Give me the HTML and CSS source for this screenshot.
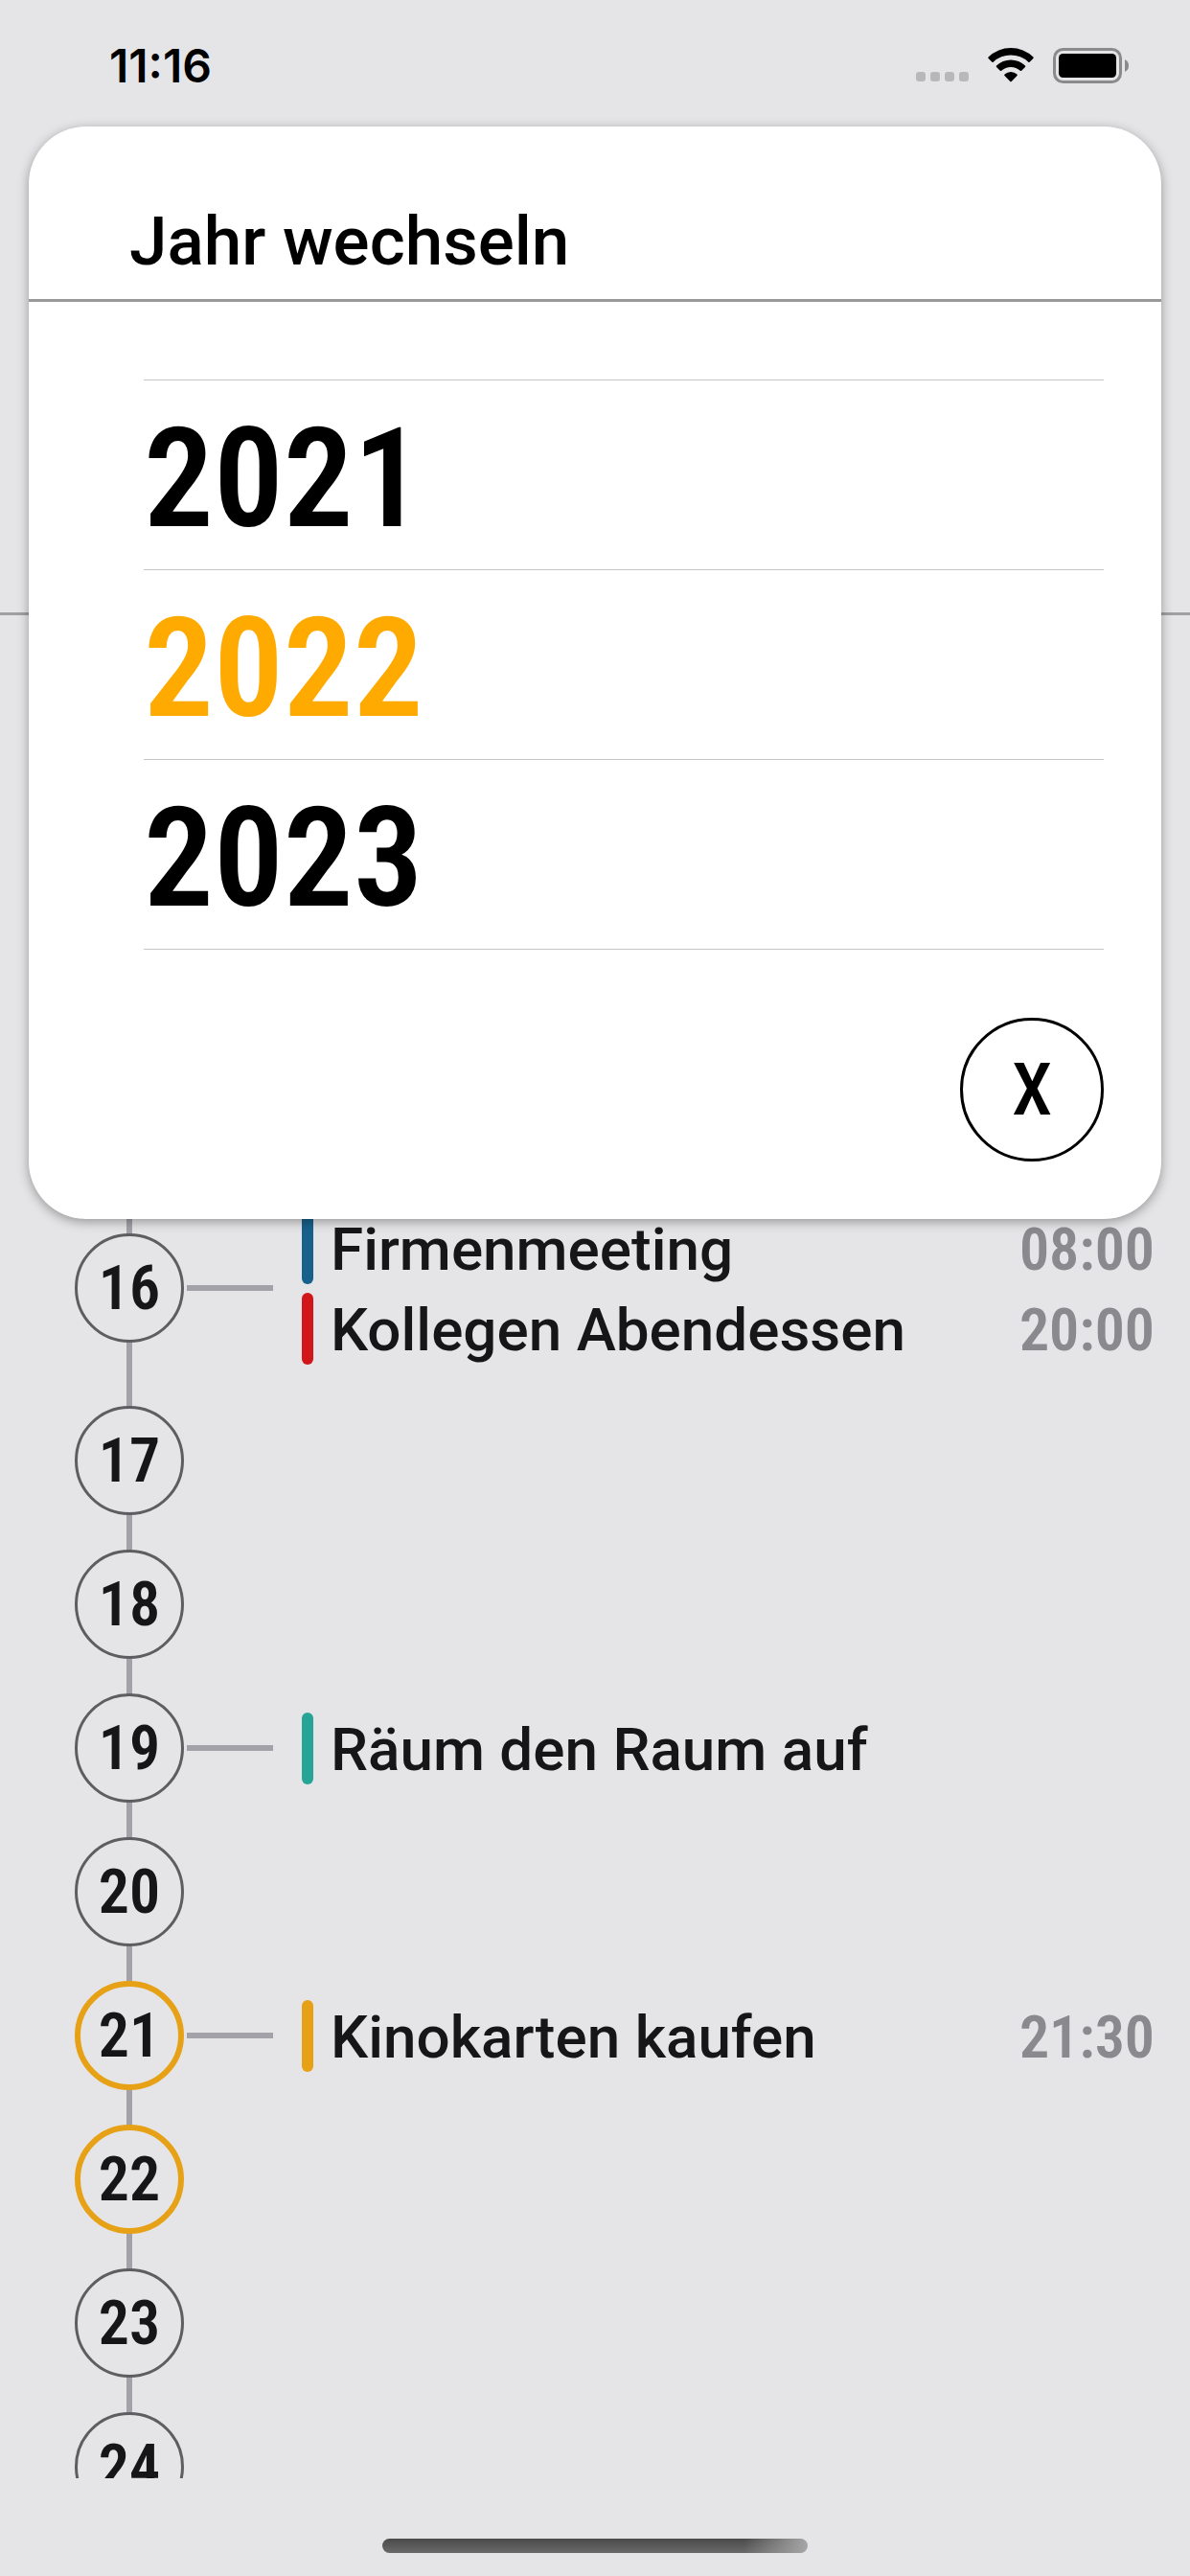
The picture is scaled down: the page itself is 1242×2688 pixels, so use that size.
FILE: index.html
```
<!DOCTYPE html>
<html lang="de">
<head>
    <meta charset="UTF-8">
    <meta name="viewport" content="width=device-width, initial-scale=1.0">
    <title>Jahr wechseln</title>
    <link rel="stylesheet" href="styles.css">
</head>
<body>
    <div class="status-bar">
        <span class="clock">11:16</span>
        <div class="status-icons">
            <svg class="signal" width="55" height="12" viewBox="0 0 55 12">
                <rect x="0" width="10" height="10" rx="3"/>
                <rect x="15" width="10" height="10" rx="3"/>
                <rect x="30" width="10" height="10" rx="3"/>
                <rect x="45" width="10" height="10" rx="3"/>
            </svg>
            <svg class="wifi" width="48" height="37" viewBox="0 0 48 37">
                <path d="M0.6 9.6 A33.5 33.5 0 0 1 47.4 9.6 Q48 10.3 47.4 11 L43.6 14.8 Q43 15.3 42.3 14.8 A26.5 26.5 0 0 0 5.7 14.8 Q5 15.3 4.4 14.8 L0.6 11 Q0 10.3 0.6 9.6 Z"/>
                <path d="M9 18.6 A21.5 21.5 0 0 1 39 18.6 Q39.6 19.3 39 20 L35.2 23.8 Q34.5 24.4 33.8 23.8 A14.5 14.5 0 0 0 14.2 23.8 Q13.5 24.4 12.8 23.8 L9 20 Q8.4 19.3 9 18.6 Z"/>
                <path d="M17.5 27.6 A9.6 9.6 0 0 1 30.5 27.6 Q31.2 28.4 30.5 29.1 L24.7 35 Q24 35.7 23.3 35 L17.5 29.1 Q16.8 28.4 17.5 27.6 Z"/>
            </svg>
            <svg class="battery" width="80" height="37" viewBox="0 0 80 37">
                <rect class="battery-body" x="1.5" y="1.5" width="69" height="34" rx="9"/>
                <rect x="6" y="6" width="60" height="25" rx="4.5"/>
                <path class="battery-tip" d="M75 12 Q79 14 79 18.5 Q79 23 75 25 Z"/>
            </svg>
        </div>
    </div>

    <header class="month-header"></header>

    <main class="timeline">
        <ul class="days">
            <li class="day">
                <div class="date"><span class="circle">16</span></div>
                <div class="link"></div>
                <div class="events">
                    <div class="event blue"><span class="name">Firmenmeeting</span><time>08:00</time></div>
                    <div class="event red"><span class="name">Kollegen Abendessen</span><time>20:00</time></div>
                </div>
            </li>
            <li class="day">
                <div class="date"><span class="circle">17</span></div>
            </li>
            <li class="day">
                <div class="date"><span class="circle">18</span></div>
            </li>
            <li class="day">
                <div class="date"><span class="circle">19</span></div>
                <div class="link"></div>
                <div class="events">
                    <div class="event green"><span class="name">Räum den Raum auf</span></div>
                </div>
            </li>
            <li class="day">
                <div class="date"><span class="circle">20</span></div>
            </li>
            <li class="day">
                <div class="date"><span class="circle marked">21</span></div>
                <div class="link"></div>
                <div class="events">
                    <div class="event orange"><span class="name">Kinokarten kaufen</span><time>21:30</time></div>
                </div>
            </li>
            <li class="day">
                <div class="date"><span class="circle marked">22</span></div>
            </li>
            <li class="day">
                <div class="date"><span class="circle">23</span></div>
            </li>
            <li class="day">
                <div class="date"><span class="circle">24</span></div>
            </li>
        </ul>
    </main>

    <footer class="home-area">
        <div class="home-indicator"></div>
    </footer>

    <!-- Year picker, opens over the timeline -->
    <section class="modal" role="dialog" aria-labelledby="modal-title">
        <h1 id="modal-title">Jahr wechseln</h1>
        <div class="years">
            <button class="year">2021</button>
            <button class="year selected">2022</button>
            <button class="year">2023</button>
        </div>
        <div class="modal-footer">
            <button class="close-btn" aria-label="Schließen">X</button>
        </div>
    </section>
</body>
</html>
```
FILE: styles.css
```
* {
    margin: 0;
    padding: 0;
    box-sizing: border-box;
}

body {
    display: flex;
    flex-direction: column;
    height: 100vh;
    overflow: hidden;
    font-family: Roboto, sans-serif;
    font-weight: 500;
    background-color: #e5e5e7;
    color: #161618;
}

/* Status bar */
.status-bar {
    display: flex;
    flex: none;
    justify-content: space-between;
    align-items: center;
    height: 136px;
    padding: 0 63px 0 114px;
}

.clock {
    font-family: Inter, sans-serif;
    font-weight: 600;
    font-size: 48px;
    color: #000;
}

.status-icons {
    display: flex;
    align-items: flex-end;
    gap: 20px;
}

.signal {
    fill: #b8b8ba;
}

.battery-body {
    fill: none;
    stroke: #8a8a8c;
    stroke-width: 3;
}

.battery-tip {
    fill: #8a8a8c;
}

.month-header {
    flex: none;
    height: 506px;
    border-bottom: 3px solid #a0a0a2;
}

/* Timeline */
.timeline {
    flex: 1;
    min-height: 0;
    overflow: hidden;
    padding-top: 597px;
}

.days {
    list-style: none;
}

.day {
    display: flex;
    align-items: center;
    min-height: 150px;
    padding-right: 37px;
}

.date {
    display: flex;
    align-self: stretch;
    align-items: center;
    justify-content: center;
    width: 114px;
    margin-left: 78px;
    background: linear-gradient(#a3a2a8, #a3a2a8) center / 6px 100% no-repeat;
}

.circle {
    display: flex;
    align-items: center;
    justify-content: center;
    width: 114px;
    height: 114px;
    border: 3px solid #5e5e60;
    border-radius: 50%;
    background-color: #e5e5e7;
    font-family: "Roboto Condensed", Roboto, sans-serif;
    font-weight: 600;
    font-size: 64px;
}

.circle.marked {
    border: 6px solid #e6a117;
}

.link {
    width: 90px;
    height: 6px;
    margin: 0 30px 0 3px;
    background-color: #a3a2a8;
}

.events {
    display: flex;
    flex: 1;
    flex-direction: column;
    gap: 9px;
    padding: 26px 0 25px;
}

.event {
    display: flex;
    align-items: center;
    height: 75px;
}

.event::before {
    content: "";
    width: 12px;
    height: 100%;
    border-radius: 6px;
}

.event.blue::before {
    background-color: #18618b;
}

.event.red::before {
    background-color: #d11719;
}

.event.green::before {
    background-color: #26a596;
}

.event.orange::before {
    background-color: #e6a117;
}

.name {
    flex: 1;
    padding-top: 2px;
    padding-left: 18px;
    font-size: 62px;
    white-space: nowrap;
}

.event time {
    padding-top: 2px;
    font-family: "Roboto Condensed", Roboto, sans-serif;
    font-weight: 600;
    font-size: 62px;
    color: #8a898e;
}

/* Home indicator */
.home-area {
    display: flex;
    flex: none;
    justify-content: center;
    height: 102px;
    padding-top: 63px;
}

.home-indicator {
    width: 444px;
    height: 15px;
    border-radius: 8px;
    background: linear-gradient(to right, transparent 85%, #a6a6a6), linear-gradient(#4a4a4a, #6a6a6a);
}

/* Year picker */
.modal {
    position: absolute;
    top: 132px;
    left: 30px;
    right: 30px;
    border-radius: 60px;
    background-color: #fff;
    box-shadow: 0 3px 12px rgba(0, 0, 0, 0.35);
    color: #000;
}

.modal h1 {
    padding: 70px 105px 10px;
    border-bottom: 3px solid #999;
    font-weight: 500;
    font-size: 71px;
    line-height: 100px;
}

.years {
    margin: 81px 60px 0 120px;
    border-top: 1px solid #c6c6c8;
}

.year {
    display: block;
    width: 100%;
    height: 198px;
    padding-top: 6px;
    border: none;
    border-bottom: 1px solid #c6c6c8;
    background: none;
    font-family: "Roboto Condensed", Roboto, sans-serif;
    font-weight: 600;
    font-size: 145px;
    text-align: left;
    color: #000;
    cursor: pointer;
}

.year.selected {
    color: #ffaa00;
}

.modal-footer {
    display: flex;
    justify-content: flex-end;
    padding: 71px 60px 60px;
}

.close-btn {
    width: 150px;
    height: 150px;
    border: 3px solid #000;
    border-radius: 50%;
    background: none;
    font-family: "Roboto Condensed", Roboto, sans-serif;
    font-weight: 500;
    font-size: 76px;
    color: #000;
    cursor: pointer;
}
```
